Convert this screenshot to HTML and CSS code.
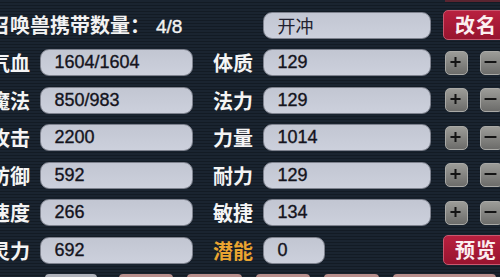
FILE: index.html
```html
<!DOCTYPE html>
<html lang="zh">
<head>
<meta charset="utf-8">
<link rel="stylesheet" href="styles.css">
</head>
<body>
<div class="screen">
  <div class="top-edge"></div>
  <div class="panel">
    <div class="title">召唤兽携带数量：<span class="num">4/8</span></div>
    <div class="field wide name">开冲</div>
    <div class="btn red">改名</div>

    <div class="label">气血</div>
    <div class="field">1604/1604</div>
    <div class="label">体质</div>
    <div class="field wide">129</div>
    <div class="pm"><svg viewBox="0 0 23 24"><path d="M6 12h11M11.5 6.5v11" /></svg></div>
    <div class="pm"><svg viewBox="0 0 23 24"><path d="M5 12h13" /></svg></div>

    <div class="label">魔法</div>
    <div class="field">850/983</div>
    <div class="label">法力</div>
    <div class="field wide">129</div>
    <div class="pm"><svg viewBox="0 0 23 24"><path d="M6 12h11M11.5 6.5v11" /></svg></div>
    <div class="pm"><svg viewBox="0 0 23 24"><path d="M5 12h13" /></svg></div>

    <div class="label">攻击</div>
    <div class="field">2200</div>
    <div class="label">力量</div>
    <div class="field wide">1014</div>
    <div class="pm"><svg viewBox="0 0 23 24"><path d="M6 12h11M11.5 6.5v11" /></svg></div>
    <div class="pm"><svg viewBox="0 0 23 24"><path d="M5 12h13" /></svg></div>

    <div class="label">防御</div>
    <div class="field">592</div>
    <div class="label">耐力</div>
    <div class="field wide">129</div>
    <div class="pm"><svg viewBox="0 0 23 24"><path d="M6 12h11M11.5 6.5v11" /></svg></div>
    <div class="pm"><svg viewBox="0 0 23 24"><path d="M5 12h13" /></svg></div>

    <div class="label">速度</div>
    <div class="field">266</div>
    <div class="label">敏捷</div>
    <div class="field wide">134</div>
    <div class="pm"><svg viewBox="0 0 23 24"><path d="M6 12h11M11.5 6.5v11" /></svg></div>
    <div class="pm"><svg viewBox="0 0 23 24"><path d="M5 12h13" /></svg></div>

    <div class="label">灵力</div>
    <div class="field">692</div>
    <div class="label gold">潜能</div>
    <div class="field small">0</div>
    <div class="btn red">预览</div>
  </div>
  <div class="bottom-row">
    <div class="tab light"></div>
    <div class="tab"></div>
    <div class="tab"></div>
    <div class="tab"></div>
    <div class="tab"></div>
    <div class="tab last"></div>
  </div>
</div>
</body>
</html>
```

FILE: styles.css
```css
html, body {
  margin: 0;
  padding: 0;
}
body {
  width: 500px;
  height: 277px;
  overflow: hidden;
  background: #18212c;
  background-image: repeating-linear-gradient(to bottom, #1a2430 0px, #1a2430 2px, #131b24 2px, #131b24 3px);
  font-family: "Noto Sans CJK SC", "Liberation Sans", sans-serif;
}
.screen {
  margin-left: -10px;
  width: 520px;
}
.top-edge {
  height: 2px;
  width: 70px;
  margin-left: 455px;
  background: #5a2430;
}
.panel {
  display: grid;
  grid-template-columns: 40px 163px 40px 172px 25px 23px;
  grid-auto-rows: 27px;
  column-gap: 10px;
  row-gap: 10.5px;
  margin-top: 9.5px;
  align-items: center;
}
.title {
  grid-column: 1 / 4;
  color: #f2f2f2;
  font-size: 20px;
  font-weight: 700;
  line-height: 27px;
  white-space: nowrap;
}
.title .num {
  font-family: "Liberation Sans", sans-serif;
  font-weight: 400;
  font-size: 19px;
  margin-left: 6px;
  -webkit-text-stroke: 0.4px #f2f2f2;
}
.label {
  color: #f4f4f4;
  font-size: 20px;
  font-weight: 700;
  line-height: 27px;
  white-space: nowrap;
}
.label.gold {
  color: #eaa531;
}
.field {
  box-sizing: border-box;
  width: 153px;
  height: 27px;
  border: 1.5px solid #7e828e;
  border-radius: 9px;
  background: linear-gradient(to bottom, #c2c6d2, #ccd0dc);
  color: #14141d;
  font-family: "Liberation Sans", sans-serif;
  font-size: 18px;
  line-height: 24px;
  padding-left: 13.5px;
  -webkit-text-stroke: 0.35px #14141d;
}
.field.wide {
  width: 168px;
}
.field.small {
  width: 62px;
}
.field.name {
  font-family: "Noto Sans CJK SC", sans-serif;
  font-size: 18px;
  color: #222230;
  -webkit-text-stroke: 0;
}
.btn {
  grid-column: 5 / 7;
  box-sizing: border-box;
  margin-left: -2px;
  width: 72px;
  height: 30px;
  border-radius: 5px;
  color: #fbeef0;
  font-size: 20px;
  font-weight: 700;
  line-height: 27px;
  padding-left: 11px;
  letter-spacing: 1px;
  white-space: nowrap;
}
.btn.red {
  background: linear-gradient(to bottom, #b8203f, #98142f);
  border: 1.5px solid #c9576e;
}
.pm {
  box-sizing: border-box;
  width: 23px;
  height: 24px;
  border-radius: 5px;
  border: 1px solid #a9a9a6;
  background: linear-gradient(to bottom, #9c9c98, #6c6c6a);
}
.pm svg {
  display: block;
  width: 100%;
  height: 100%;
  margin: -1px;
}
.pm svg path {
  stroke: #141414;
  stroke-width: 2.2;
  fill: none;
}
.bottom-row {
  display: flex;
  margin-top: 10.5px;
  margin-left: 55px;
}
.tab {
  height: 10px;
  width: 58px;
  margin-right: 14px;
  border-radius: 4px;
  background: #b78e8c;
}
.tab.light {
  width: 55px;
  margin-right: 22px;
  background: #aeb1ba;
}
.tab.last {
  width: 110px;
}
```
